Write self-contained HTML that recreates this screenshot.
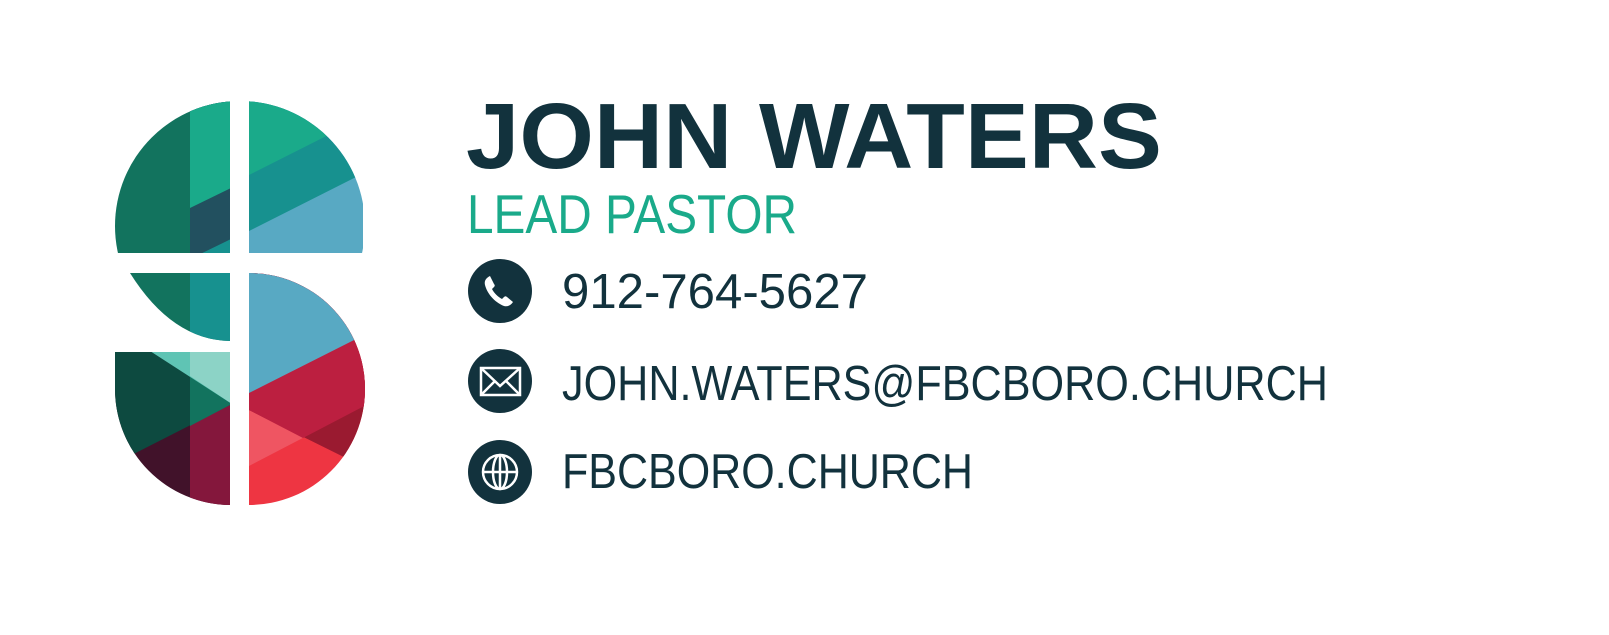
<!DOCTYPE html>
<html><head><meta charset="utf-8"><style>html,body{margin:0;padding:0;background:#fff}svg{display:block}</style></head>
<body>
<svg width="1609" height="635" viewBox="0 0 1609 635" xmlns="http://www.w3.org/2000/svg">
<defs>
<clipPath id="tl"><path d="M230,0 V253 H100 V0 Z"/></clipPath>
<clipPath id="tr"><path d="M249,0 V253 H363 V0 Z"/></clipPath>
<clipPath id="tc"><circle cx="240" cy="226" r="125"/></clipPath>
<clipPath id="mc"><path d="M130,273 Q172,340 230,341 V273 Z"/></clipPath>
<clipPath id="br"><path d="M249,273 A116 116 0 0 1 249 505 Z"/></clipPath>
<clipPath id="bl"><path d="M115,352 H230 V505 A116 116 0 0 1 115 389 Z"/></clipPath>
</defs>
<g clip-path="url(#tc)">
 <g clip-path="url(#tl)">
  <rect x="100" y="90" width="140" height="170" fill="#12735e"/>
  <rect x="190" y="90" width="45" height="170" fill="#17918f"/>
  <path d="M190,90 H235 V237 L190,259 Z" fill="#22505f"/>
  <path d="M190,90 H235 V186 L190,208 Z" fill="#1aaa8a"/>
 </g>
 <g clip-path="url(#tr)">
  <rect x="249" y="90" width="120" height="170" fill="#58a9c3"/>
  <path d="M249,90 H370 V170 L249,231 Z" fill="#17918f"/>
  <path d="M249,90 H370 V114 L249,175 Z" fill="#1aaa8a"/>
 </g>
</g>
<g clip-path="url(#mc)">
 <rect x="110" y="270" width="125" height="80" fill="#12735e"/>
 <rect x="190" y="270" width="45" height="80" fill="#17918f"/>
</g>
<g clip-path="url(#br)">
 <rect x="249" y="270" width="125" height="240" fill="#ee3542"/>
 <path d="M249,270 V466 L372,402 V270 Z" fill="#ef5562"/>
 <path d="M249,270 V410 L372,471 V270 Z" fill="#9a1a30"/>
 <path d="M249,270 V410 L303,438 L372,402 V270 Z" fill="#bc1f40"/>
 <path d="M249,270 V393 L372,331 V270 Z" fill="#58a9c3"/>
</g>
<g clip-path="url(#bl)">
 <rect x="110" y="350" width="125" height="160" fill="#41122a"/>
 <rect x="190" y="350" width="45" height="160" fill="#84173c"/>
 <path d="M110,350 V466 L232,404 V350 Z" fill="#0d4a40"/>
 <path d="M190,350 V426 L232,404 V350 Z" fill="#12735e"/>
 <path d="M110,350 H232 V404 L150,351 Z" fill="#5fc4b4"/>
 <path d="M190,350 H232 V404 L190,376 Z" fill="#8cd3c6"/>
</g>

<text x="466" y="168" font-family="Liberation Sans, sans-serif" font-weight="bold" font-size="93" fill="#12323d" textLength="696" lengthAdjust="spacingAndGlyphs">JOHN WATERS</text>
<text x="467" y="233" font-family="Liberation Sans, sans-serif" font-size="55" fill="#1aaa8a" textLength="330" lengthAdjust="spacingAndGlyphs">LEAD PASTOR</text>
<g font-family="Liberation Sans, sans-serif" font-size="49" fill="#12323d">
<text x="562" y="308" textLength="306" lengthAdjust="spacingAndGlyphs">912-764-5627</text>
<text x="562" y="400" textLength="766" lengthAdjust="spacingAndGlyphs">JOHN.WATERS@FBCBORO.CHURCH</text>
<text x="562" y="488" textLength="411" lengthAdjust="spacingAndGlyphs">FBCBORO.CHURCH</text>
</g>

<circle cx="500" cy="291" r="32" fill="#12323d"/>
<path d="M490,276 c-4,2 -6,5 -5,9 c2,8 9,17 19,21 c4,1 7,-1 9,-4 l-6,-5 c-1,-1 -2,-1 -3,0 l-2,2 c-4,-2 -8,-6 -10,-10 l2,-2 c1,-1 1,-2 0,-3 Z" fill="#fff"/>
<circle cx="500" cy="381" r="32" fill="#12323d"/>
<g fill="none" stroke="#fff" stroke-width="2.5">
 <rect x="481" y="368" width="39" height="27"/>
 <path d="M481,368 L500,386 L520,368 M481,395 L495,381 M520,395 L506,381"/>
</g>
<circle cx="500" cy="472" r="32" fill="#12323d"/>
<g fill="none" stroke="#fff" stroke-width="2.5">
 <circle cx="500" cy="472" r="17"/>
 <ellipse cx="500" cy="472" rx="7" ry="17"/>
 <path d="M500,455 V489 M483,472 H517"/>
</g>
</svg>
</body></html>
